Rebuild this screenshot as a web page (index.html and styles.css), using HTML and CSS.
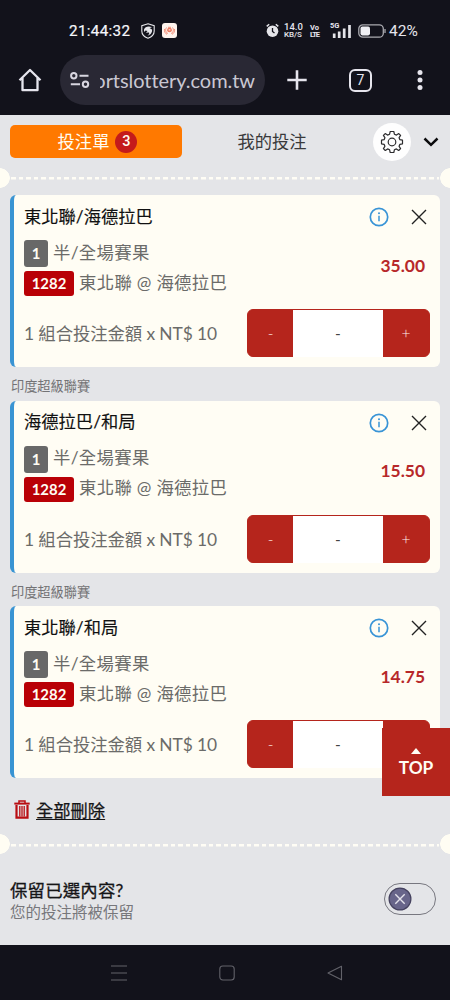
FILE: index.html
```
<!DOCTYPE html>
<html lang="zh-Hant">
<head>
<meta charset="utf-8">
<title>投注單</title>
<link rel="stylesheet" href="styles.css">
</head>
<body>
<svg class="defs" width="0" height="0">
  <symbol id="info" viewBox="0 0 20 20"><circle cx="10" cy="10" r="8.7" fill="none" stroke="#3994d6" stroke-width="1.7"/><path d="M10 8.8V14.2" stroke="#3994d6" stroke-width="1.5"/><circle cx="10" cy="6.2" r="1" fill="#3994d6"/></symbol>
  <symbol id="close" viewBox="0 0 16 16"><path d="M1 1L15 15M15 1L1 15" stroke="#222" stroke-width="1.4" fill="none"/></symbol>
</svg>
<div class="phone">
  <header class="chrome">
    <div class="status">
      <span class="clock">21:44:32</span>
      <svg class="shield" width="14" height="16" viewBox="0 0 14 16"><path d="M7 .8L13.2 2.6V8C13.2 11.5 10.5 14 7 15.2C3.500 14 .8 11.500 .8 8V2.600Z" fill="none" stroke="#e6e6ea" stroke-width="1.1"/><path d="M3 6.500C4 3.500 8 2.500 11 4.500L8.500 5L11 6.500C11.500 9.500 9.500 12 6.500 12.700C8 11.500 8.500 10.500 8 9.500L5 9.800L6.500 8L4.500 7.500L3 9Z" fill="#e6e6ea"/></svg>
      <svg class="appicon" width="15" height="15" viewBox="0 0 15 15"><rect width="15" height="15" rx="3" fill="#fff4ee"/><g fill="none" stroke="#ed7a60"><circle cx="7.500" cy="7" r="1.700" stroke-width="1.300"/><path d="M4.500 4.500C3 6.500 3.500 9.500 6 10.500M10.500 4.500C12 6.500 11.500 9.500 9 10.500M2.500 6C2 8.500 3.200 10.500 5 11.300M12.500 6C13 8.500 11.800 10.500 10 11.300M5 7.200H10M6 4.300H9" stroke-width=".8"/></g></svg>
      <span class="grow"></span>
      <svg class="alarm" width="13" height="15" viewBox="0 0 13 15"><circle cx="6.500" cy="8.200" r="5.800" fill="#e4e4e9"/><path d="M.7 3.400L3.200 1.200M12.300 3.400L9.800 1.200" stroke="#e4e4e9" stroke-width="1.400"/><path d="M6.500 5V8.500L8.500 10" fill="none" stroke="#12121b" stroke-width="1.300"/></svg>
      <span class="rate"><b>14.0</b><b class="unit">KB/S</b></span>
      <span class="volte"><b>Vo</b><b>LTE</b></span>
      <span class="signal"><b>5G</b><svg width="20" height="14" viewBox="0 0 20 14"><path d="M2.200 14V9.500M7.200 14V7.500M12.200 14V4.500M17.500 14V1" stroke="#e4e4e9" stroke-width="2.700"/></svg></span>
      <svg class="battery" width="28" height="14" viewBox="0 0 28 14"><rect x=".8" y=".8" width="24.500" height="12.400" rx="4" fill="none" stroke="#aaaab0" stroke-width="1.300"/><rect x="2.500" y="2.600" width="9.500" height="8.800" rx="1.800" fill="#f0f0f4"/><path d="M27 5V9" stroke="#aaaab0" stroke-width="1.300"/></svg>
      <span class="percent">42%</span>
    </div>
    <div class="toolbar">
      <svg class="home" width="24" height="24" viewBox="0 0 24 24"><path d="M1.500 12.200L12 2L22.500 12.200M4.500 10V22.200H19.500V10" fill="none" stroke="#e6e5ed" stroke-width="2.300" stroke-linejoin="round"/></svg>
      <div class="address">
        <svg width="20" height="16" viewBox="0 0 20 16"><g fill="none" stroke="#d8d6e0" stroke-width="2"><circle cx="3.800" cy="3.800" r="2.700"/><path d="M9.500 3.800H18.500M.8 12.200H10"/><circle cx="15.500" cy="12.200" r="2.700"/></g></svg>
        <span class="url"><span>ortslottery.com.tw</span></span>
      </div>
      <svg class="plus" width="20" height="20" viewBox="0 0 20 20"><path d="M10 .3V19.700M.3 10H19.700" stroke="#e6e5ed" stroke-width="2.600"/></svg>
      <span class="tabcount">7</span>
      <svg class="more" width="6" height="20" viewBox="0 0 6 20"><g fill="#e6e5ed"><circle cx="3" cy="2.600" r="2.500"/><circle cx="3" cy="10" r="2.500"/><circle cx="3" cy="17.400" r="2.500"/></g></svg>
    </div>
  </header>

  <main class="page">
    <nav class="tabs">
      <div class="tab active">投注單<span class="count">3</span></div>
      <div class="tab">我的投注</div>
      <span class="gear"><svg width="24" height="24" viewBox="0 0 24 24"><g fill="none" stroke="#2c2c2e" stroke-width="1.200" stroke-linejoin="round"><path d="M10.200 1.500H13.800L14.400 4.200L16.500 5.100L18.800 3.600L20.600 5.400L19.100 7.700L19.900 9.700L22.500 10.200V13.800L19.900 14.300L19.100 16.300L20.600 18.600L18.700 20.500L16.400 18.900L14.400 19.800L13.800 22.500H10.200L9.600 19.800L7.600 18.900L5.300 20.500L3.400 18.600L4.900 16.300L4.100 14.300L1.500 13.800V10.200L4.100 9.700L4.900 7.700L3.400 5.400L5.200 3.600L7.500 5.100L9.600 4.200Z"/><circle cx="12" cy="12" r="3.800"/></g></svg></span>
      <svg class="chevron" width="16" height="10" viewBox="0 0 16 10"><path d="M1.500 1.500L8 7.800L14.500 1.500" fill="none" stroke="#0b0b0d" stroke-width="2.500"/></svg>
    </nav>
    <div class="tear"></div>

    <section class="card">
      <div class="head"><h2>東北聯/海德拉巴</h2><svg class="info"><use href="#info"/></svg><svg class="close"><use href="#close"/></svg></div>
      <div class="detail">
        <div class="lines"><p><b class="tag grey">1</b><span>半/全場賽果</span></p><p><b class="tag red">1282</b><span>東北聯 @ 海德拉巴</span></p></div>
        <strong class="odds">35.00</strong>
      </div>
      <div class="stake"><span class="amount">1 組合投注金額 x NT$ 10</span><div class="stepper"><span>-</span><span class="value">-</span><span>+</span></div></div>
    </section>
    <div class="league">印度超級聯賽</div>
    <section class="card">
      <div class="head"><h2>海德拉巴/和局</h2><svg class="info"><use href="#info"/></svg><svg class="close"><use href="#close"/></svg></div>
      <div class="detail">
        <div class="lines"><p><b class="tag grey">1</b><span>半/全場賽果</span></p><p><b class="tag red">1282</b><span>東北聯 @ 海德拉巴</span></p></div>
        <strong class="odds">15.50</strong>
      </div>
      <div class="stake"><span class="amount">1 組合投注金額 x NT$ 10</span><div class="stepper"><span>-</span><span class="value">-</span><span>+</span></div></div>
    </section>
    <div class="league">印度超級聯賽</div>
    <section class="card">
      <div class="head"><h2>東北聯/和局</h2><svg class="info"><use href="#info"/></svg><svg class="close"><use href="#close"/></svg></div>
      <div class="detail">
        <div class="lines"><p><b class="tag grey">1</b><span>半/全場賽果</span></p><p><b class="tag red">1282</b><span>東北聯 @ 海德拉巴</span></p></div>
        <strong class="odds">14.75</strong>
      </div>
      <div class="stake"><span class="amount">1 組合投注金額 x NT$ 10</span><div class="stepper"><span>-</span><span class="value">-</span><span></span></div></div>
    </section>

    <div class="clear">
      <svg width="16" height="19" viewBox="0 0 16 19"><g fill="none" stroke="#b90d12"><path d="M.3 3.600H15.700" stroke-width="2"/><path d="M5 3V1H11V3" stroke-width="1.500"/><path d="M2.500 5V17.600H13.500V5" stroke-width="2.200"/><path d="M5.800 6V16.500M8 6V16.500M10.200 6V16.500" stroke-width="1.300"/></g></svg>
      <a>全部刪除</a>
    </div>
    <div class="tear"></div>
    <div class="keep">
      <div><h3>保留已選內容?</h3><p>您的投注將被保留</p></div>
      <span class="switch"><svg width="24" height="24" viewBox="0 0 24 24"><circle cx="12" cy="12" r="10.900" fill="#68658a" stroke="#45425f" stroke-width="1.200"/><path d="M7.300 7.300L16.700 16.700M16.700 7.300L7.300 16.700" stroke="#e3e2ea" stroke-width="1.400"/></svg></span>
    </div>
    <div class="top"><svg width="10" height="6" viewBox="0 0 10 6"><path d="M0 6L5 0L10 6Z" fill="#fffef5"/></svg><span>TOP</span></div>
  </main>

  <footer class="sysnav">
    <svg width="16" height="16" viewBox="0 0 16 16"><path d="M0 1H16M0 8H16M0 15H16" stroke="#62626a" stroke-width="1.100"/></svg>
    <svg width="16" height="16" viewBox="0 0 16 16"><rect x=".8" y="1" width="14.400" height="14" rx="3" fill="none" stroke="#62626a" stroke-width="1.100"/></svg>
    <svg width="16" height="16" viewBox="0 0 16 16"><path d="M1 8L14.500 1.200V14.800Z" fill="none" stroke="#62626a" stroke-width="1.100" stroke-linejoin="round"/></svg>
  </footer>
</div>
</body>
</html>
```

FILE: styles.css
```
* { box-sizing: border-box; }
body { margin: 0; font-family: Lato, "Noto Sans CJK TC", sans-serif; background: #12121b; }
h2, h3, p { margin: 0; font-weight: 400; }
.defs { position: absolute; }
svg { display: block; flex: none; }
.phone { width: 450px; height: 1000px; display: flex; flex-direction: column; overflow: hidden; white-space: nowrap; }
.chrome { height: 115px; flex: none; background: #12121b; color: #e6e5ed; padding-top: 15px; }

.status { height: 31px; display: flex; align-items: center; padding: 0 31px 0 69px; font-family: Roboto, sans-serif; }
.clock { width: 62px; font-size: 15.2px; font-weight: 400; letter-spacing: .35px; color: #f6f6fa; -webkit-text-stroke: .2px #f6f6fa; }
.shield { margin-left: 10px; }
.appicon { margin-left: 7px; }
.grow { flex: 1; }
.rate, .volte { display: flex; flex-direction: column; line-height: 8px; font-size: 9.5px; }
.rate { width: 20px; margin-left: 5px; }
.rate b { font-weight: 500; }
.rate .unit { font-size: 8px; line-height: 7px; letter-spacing: -.1px; }
.volte { width: 10px; margin-left: 6px; font-size: 7.5px; line-height: 7px; letter-spacing: -1px; }
.volte b:first-child { letter-spacing: 0; }
.signal { width: 22px; height: 14px; margin: 0 6px 0 10px; position: relative; padding-left: 2px; }
.signal b { position: absolute; left: 0; top: -2px; font-size: 7.5px; line-height: 8px; }
.percent { width: 30px; margin-left: 3px; font-size: 15.5px; }

.toolbar { height: 68px; display: flex; align-items: center; padding-left: 18px; }
.address { width: 205px; height: 50px; border-radius: 25px; background: #292834; margin-left: 18px; padding-left: 10px; display: flex; align-items: center; }
.url { width: 155px; height: 28px; margin-left: 10px; overflow: hidden; display: flex; justify-content: flex-end; font-size: 20px; line-height: 28px; letter-spacing: -.05px; color: #c9c7d2; }
.plus { margin-left: 22px; }
.tabcount { width: 23px; height: 23px; margin-left: 42px; border: 2px solid #e6e5ed; border-radius: 6px; font: 14px/19px Roboto, sans-serif; text-align: center; }
.more { margin-left: 45px; }

.page { position: relative; height: 830px; flex: none; background: #e4e5e8; padding-top: 7px; }
.tabs { height: 39px; display: flex; align-items: center; padding-left: 10px; }
.tab { width: 180px; text-align: center; font-size: 17.3px; line-height: 33px; color: #39393b; }
.tab.active { width: 172px; height: 33px; border-radius: 5px; background: #ff7900; color: #fffdf2; display: flex; justify-content: center; align-items: center; padding-left: 3px; }
.count { width: 22px; height: 22px; margin-left: 6px; border-radius: 50%; background: #c41b1b; font: 500 14.5px/22px Roboto, sans-serif; }
.gear { width: 38px; height: 38px; margin-left: 11px; border-radius: 50%; background: #fefefe; display: flex; align-items: center; justify-content: center; }
.chevron { margin-left: 12px; }

.tear { height: 20px; margin: 6.5px 0 7.5px; background:
  radial-gradient(circle at 0 50%, #fffdf3 9.5px, transparent 10px),
  radial-gradient(circle at 100% 50%, #fffdf3 9.5px, transparent 10px),
  repeating-linear-gradient(90deg, #fffdf5 0 4.6px, transparent 4.6px 7.6px) 11px 9.5px / 428px 2.5px no-repeat; }

.card { height: 172px; margin: 0 10px; border-left: 4px solid #3994d3; border-radius: 6px; background: #fffdf4; padding: 0 10px; }
.head { height: 45px; display: flex; align-items: center; padding-bottom: 1px; }
.head h2 { flex: 1; font-size: 17.3px; line-height: 24px; padding-bottom: 1px; color: #111; -webkit-text-stroke: .15px #111; }
.info { width: 20px; height: 20px; }
.close { width: 16px; height: 16px; margin: 0 3px 0 22px; }
.detail { height: 56px; display: flex; justify-content: space-between; align-items: center; }
.lines { display: grid; grid-template-rows: 27px 25px; gap: 4px; }
.lines p { display: flex; align-items: center; color: #6b6b69; font-size: 17.4px; letter-spacing: .3px; }
.lines p span { line-height: 24px; padding-bottom: 2px; }
.tag { border-radius: 3px; color: #fffdf4; font-size: 14.9px; text-align: center; margin-right: 5px; letter-spacing: 0; }
.grey { width: 24px; height: 27px; line-height: 27px; background: #686868; }
.red { width: 50px; height: 25px; line-height: 25px; background: #b90006; }
.odds { margin: 0 5px 6px 0; font-size: 17.4px; color: #b7282a; }
.stake { margin-top: 13px; display: flex; justify-content: space-between; }
.amount { font-size: 17.4px; line-height: 49px; letter-spacing: -.1px; color: #6b6b69; }
.stepper { width: 183px; height: 48px; border: 1px solid #b5251c; border-radius: 6px; background: #b5251c; display: grid; grid-template-columns: 45px 90px 46px; text-align: center; font-size: 15.5px; font-weight: 300; line-height: 47px; color: #fff0e8; }
.stepper .value { background: #fff; color: #444; font-weight: 400; }
.league { height: 33.5px; line-height: 38px; padding-left: 11px; font-size: 13.2px; color: #737375; }

.clear { height: 49px; margin-top: 7px; padding-left: 14px; display: flex; align-items: center; gap: 6px; font-size: 17.3px; color: #151517; }
.clear a { text-decoration: underline; text-underline-offset: 2px; -webkit-text-stroke: .25px #151517; }
.clear + .tear { margin: 0; }
.keep { display: flex; justify-content: space-between; padding: 25px 14px 0 10px; }
.keep h3 { font-size: 17.4px; line-height: 24px; letter-spacing: .2px; color: #151517; -webkit-text-stroke: .3px #151517; }
.keep h3::first-letter { letter-spacing: .2px; }
.keep p { font-size: 15.5px; line-height: 19px; color: #77777b; }
.switch { width: 52px; height: 32px; margin-top: 4px; border: 1.300px solid #77777f; border-radius: 16px; padding: 3px 3px; }
.top { position: absolute; right: 0; top: 613px; width: 68px; height: 68px; background: #b5251c; color: #fffdf4; display: flex; flex-direction: column; align-items: center; padding-top: 20px; font-size: 17.3px; font-weight: 700; line-height: 28px; }

.sysnav { height: 55px; background: #12121b; display: flex; align-items: center; justify-content: center; gap: 92px; padding-left: 4px; }
```
